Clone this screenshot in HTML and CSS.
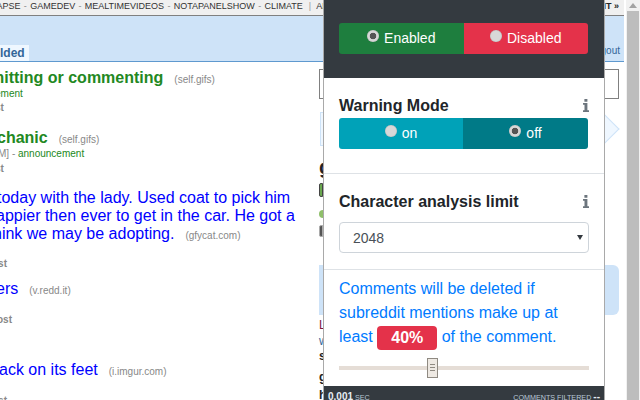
FILE: index.html
```html
<!DOCTYPE html>
<html lang="en">
<head>
<meta charset="utf-8">
<title>Reddit filter popup</title>
<link rel="stylesheet" href="styles.css">
</head>
<body>
<div class="viewport">
  <div class="page">
    <nav class="topbar">
      <span class="cropped-nav">COLLAPSE<i>-</i>GAMEDEV<i>-</i>MEALTIMEVIDEOS<i>-</i>NOTAPANELSHOW<i>-</i>CLIMATE<i class="bar">|</i>ALL</span>
      <span class="edit">EDIT »</span>
    </nav>
    <header class="header">
      <span class="tab">lded</span>
      <span class="logout">logout</span>
    </header>
    <div class="content">
      <main class="posts">
        <div class="title stick t1"><span>mitting or commenting</span><small>(self.gifs)</small></div>
        <div class="tag green t2">ement</div>
        <div class="meta m1">st</div>
        <div class="title stick t3"><span>chanic</span><small>(self.gifs)</small></div>
        <div class="tag t4"><b>M] -</b> <span class="green">announcement</span></div>
        <div class="meta m2">st</div>
        <div class="title link t5">
          <div class="l1">today with the lady. Used coat to pick him</div>
          <div class="l2">appier then ever to get in the car. He got a</div>
          <div class="l3">hink we may be adopting.<small>(gfycat.com)</small></div>
        </div>
        <div class="meta m3">ost</div>
        <div class="title link t6">ers<small>(v.redd.it)</small></div>
        <div class="meta m4">ost</div>
        <div class="title link t7">ack on its feet<small>(i.imgur.com)</small></div>
        <div class="meta m5">ost</div>
      </main>
      <aside class="sidebar">
        <div class="search"></div>
        <div class="submit"></div>
        <div class="side-g">g</div>
        <div class="side-green"></div>
        <div class="side-dot"></div>
        <div class="side-gear"></div>
        <div class="side-blue"></div>
        <div class="side-line">L</div>
        <div class="side-line near">w</div>
        <div class="side-line bold">s</div>
        <div class="side-line bold gap">g</div>
        <div class="side-line bold last">h</div>
      </aside>
      <div class="scroll-gap"></div>
    </div>
  </div>
  <div class="scrollbar"><span class="arrow"></span><span class="thumb"></span></div>

  <section class="popup">
    <div class="popup-head">
      <div class="toggle">
        <div class="opt enabled"><span class="radio checked"></span>Enabled</div>
        <div class="opt disabled"><span class="radio"></span>Disabled</div>
      </div>
    </div>
    <div class="block warn">
      <h2>Warning Mode <svg class="info" viewBox="0 0 6 13"><path d="M1.4 0h3v2.8h-3zM0 4h4.4v7.2H6V13H0v-1.8h1.5V5.8H0z"/></svg></h2>
      <div class="toggle">
        <div class="opt on"><span class="radio"></span>on</div>
        <div class="opt off"><span class="radio checked"></span>off</div>
      </div>
    </div>
    <div class="block limit">
      <h2>Character analysis limit <svg class="info" viewBox="0 0 6 13"><path d="M1.4 0h3v2.8h-3zM0 4h4.4v7.2H6V13H0v-1.8h1.5V5.8H0z"/></svg></h2>
      <div class="select">2048<span class="caret"></span></div>
    </div>
    <div class="block mentions">
      <p>Comments will be deleted if subreddit mentions make up at least <span class="badge">40%</span> of the comment.</p>
      <div class="slider"><span class="handle"><i></i><i></i><i></i></span></div>
    </div>
    <footer class="popup-foot">
      <span><b>0.001</b> SEC</span>
      <span>COMMENTS FILTERED <b>--</b></span>
    </footer>
  </section>
</div>
</body>
</html>
```

FILE: styles.css
```css
* { box-sizing: border-box; }
html, body { margin: 0; padding: 0; height: 100%; overflow: hidden; background: #fff; }
body { font-family: "Liberation Sans", Arial, sans-serif; }
.viewport { position: relative; width: 640px; height: 400px; overflow: hidden; display: flex; }
.page { width: 624px; flex: none; overflow: hidden; }

.topbar { height: 16px; background: #f0f0f0; border-bottom: 1px solid #808080; font-size: 9px; line-height: 12px; color: #333; display: flex; justify-content: space-between; white-space: nowrap; padding-right: 5px; overflow: hidden; }
.cropped-nav { margin-left: -27px; }
.cropped-nav i { font-style: normal; color: #888; margin: 0 3.3px; }
.cropped-nav i.bar { margin: 0 5px 0 6px; color: #999; }
.edit { font-weight: bold; color: #222; }

.header { height: 46px; background: #cee3f8; border-bottom: 1px solid #5f99cf; display: flex; justify-content: space-between; align-items: flex-end; padding-right: 4px; }
.tab { width: 29px; height: 16px; background: #eff7ff; color: #369; font-size: 12px; font-weight: bold; line-height: 17px; text-align: right; padding-right: 6px; }
.logout { font-size: 10px; line-height: 14px; color: #369; margin-bottom: 3px; }

.content { display: flex; height: 338px; }
.posts { width: 319px; flex: none; overflow: hidden; white-space: nowrap; }
.title { font-size: 16px; line-height: 18px; }
.title small { font-size: 10px; font-weight: normal; color: #888; margin-left: 11px; }
.stick { color: #228822; font-weight: bold; }
.link { color: #0000ff; }
.tag { font-size: 10px; line-height: 12px; color: #888; }
.tag b { font-weight: normal; }
.green { color: #228822; }
.meta { font-size: 10px; line-height: 12px; color: #888; font-weight: bold; }
.t1 { margin: 7px 0 0 -10px; }
.t2 { margin: -1px 0 0 -5px; }
.m1 { margin: 2px 0 0 -5px; }
.t3 { margin: 15px 0 0 -3px; }
.t4 { margin: -1px 0 0 -2px; }
.m2 { margin: 3px 0 0 -5px; }
.t5 { margin: 14px 0 0 0; }
.l1 { margin-left: -3px; }
.l2 { margin-left: -4px; }
.l3 { margin-left: -7px; }
.m3 { margin: 13px 0 0 -8px; }
.t6 { margin: 10px 0 0 -4px; }
.m4 { margin: 14px 0 0 -3px; }
.t7 { margin: 35px 0 0 -1px; }
.m5 { margin: 14px 0 0 -8px; }

.sidebar { width: 300px; flex: none; }
.search { height: 30px; margin-top: 7px; border: 1px solid #808080; }
.submit { position: relative; height: 34px; width: 285px; margin: 13px 0 0 1px; background: #eff7ff; border: 1px solid #cee3f8; }
.submit::after { content: ""; position: absolute; right: -11px; top: 5px; width: 21px; height: 21px; background: #eff7ff; border: 1px solid #cee3f8; border-left: 0; border-bottom: 0; transform: rotate(45deg); }
.side-g { font-size: 20px; line-height: 20px; font-weight: bold; color: #222; margin-top: 11px; }
.side-green { width: 4px; height: 14px; margin-top: 6px; background: #6aa84f; border: 1px solid #444; border-radius: 2px 0 0 2px; }
.side-dot { width: 4px; height: 8px; margin-top: 13px; background: #8fbf6a; border-radius: 4px 0 0 4px; }
.side-gear { width: 4px; height: 12px; margin-top: 7px; background: #555; border: 1px solid #aaa; border-radius: 2px 0 0 2px; }
.side-blue { height: 50px; margin-top: 28px; background: #cee3f8; border-radius: 0 6px 6px 0; }
.side-line { font-size: 12px; line-height: 15px; height: 15px; color: #7a1540; margin-top: 3px; }
.side-line.near { margin-top: 1px; color: #369; }
.side-line.bold { color: #222; font-weight: bold; margin-top: 0; }
.side-line.gap { margin-top: 6px; }
.side-line.last { margin-top: 3px; }
.scroll-gap { flex: 1; }

.scrollbar { flex: 1; background: #f1f1f1; display: flex; flex-direction: column; align-items: center; border-left: 2px solid #fff; }
.arrow { width: 0; height: 0; margin: 3px 0 3px; border: 4px solid transparent; border-top: 0; border-bottom: 5px solid #a3a3a3; }
.thumb { width: 12px; flex: 1; background: #bdbdbd; }

.popup { position: absolute; left: 323px; top: 0; width: 282px; height: 400px; background: #fff; border-left: 1px solid #a9a9a9; border-right: 1px solid #a9a9a9; display: flex; flex-direction: column; color: #212529; }
.popup-head { height: 78px; background: #343a40; padding: 23px 15px 0; }
.toggle { display: flex; height: 31px; width: 249px; border-radius: 3px; overflow: hidden; }
.opt { flex: 1; display: flex; justify-content: center; align-items: center; color: #fff; font-size: 14px; line-height: 31px; }
.enabled { background: #1e7e3e; }
.disabled { background: #e4324a; }
.on { background: #00a2b8; flex: 0 0 124px; }
.off { background: #007a87; }
.radio { width: 12px; height: 12px; border-radius: 50%; background: #d8d8d8; margin: -5px 5px 0 0; box-shadow: inset 0 0 1px #999; }
.radio.checked { background: radial-gradient(circle, #555 0 3px, #d8d8d8 3.6px); }

.block { padding: 0 15px; }
h2 { margin: 0; font-size: 16px; line-height: 20px; font-weight: bold; display: flex; justify-content: space-between; align-items: center; }
.info { width: 6px; height: 13px; fill: #6c757d; margin-top: -2px; }
.warn { height: 96px; border-bottom: 1px solid #dee2e6; padding-top: 18px; }
.warn h2 { margin-bottom: 2px; }
.limit { height: 96px; border-bottom: 1px solid #dee2e6; padding-top: 18px; }
.select { position: relative; width: 250px; height: 31px; margin-top: 10px; border: 1px solid #ced4da; border-radius: 4px; font-size: 14px; line-height: 31px; color: #495057; padding-left: 13px; }
.caret { position: absolute; right: 5px; top: 12px; border: 3.5px solid transparent; border-top: 5px solid #343a40; border-bottom: 0; }
.mentions { height: 116px; padding-top: 7px; }
.mentions p { margin: 0; font-size: 16px; line-height: 24px; color: #007bff; }
.badge { display: inline-block; width: 60px; height: 24px; background: #e4324a; color: #fff; font-weight: bold; text-align: center; border-radius: 4px; vertical-align: middle; line-height: 24px; }
.slider { position: relative; width: 250px; height: 4px; margin-top: 16px; background: #e5ddd6; }
.handle { position: absolute; left: 88px; top: -8px; width: 11px; height: 20px; background: #eee9e3; border: 1px solid #8f8a82; display: flex; flex-direction: column; justify-content: center; gap: 2px; padding: 0 2px; }
.handle i { height: 1px; background: #8f8a82; }
.popup-foot { flex: 1; background: #343a40; color: #b9c8d6; font-size: 7.2px; line-height: 10px; display: flex; justify-content: space-between; align-items: flex-start; padding: 6px 4px 0 4px; overflow: hidden; white-space: nowrap; }
.popup-foot b { font-size: 10px; color: #e6edf3; }
```
